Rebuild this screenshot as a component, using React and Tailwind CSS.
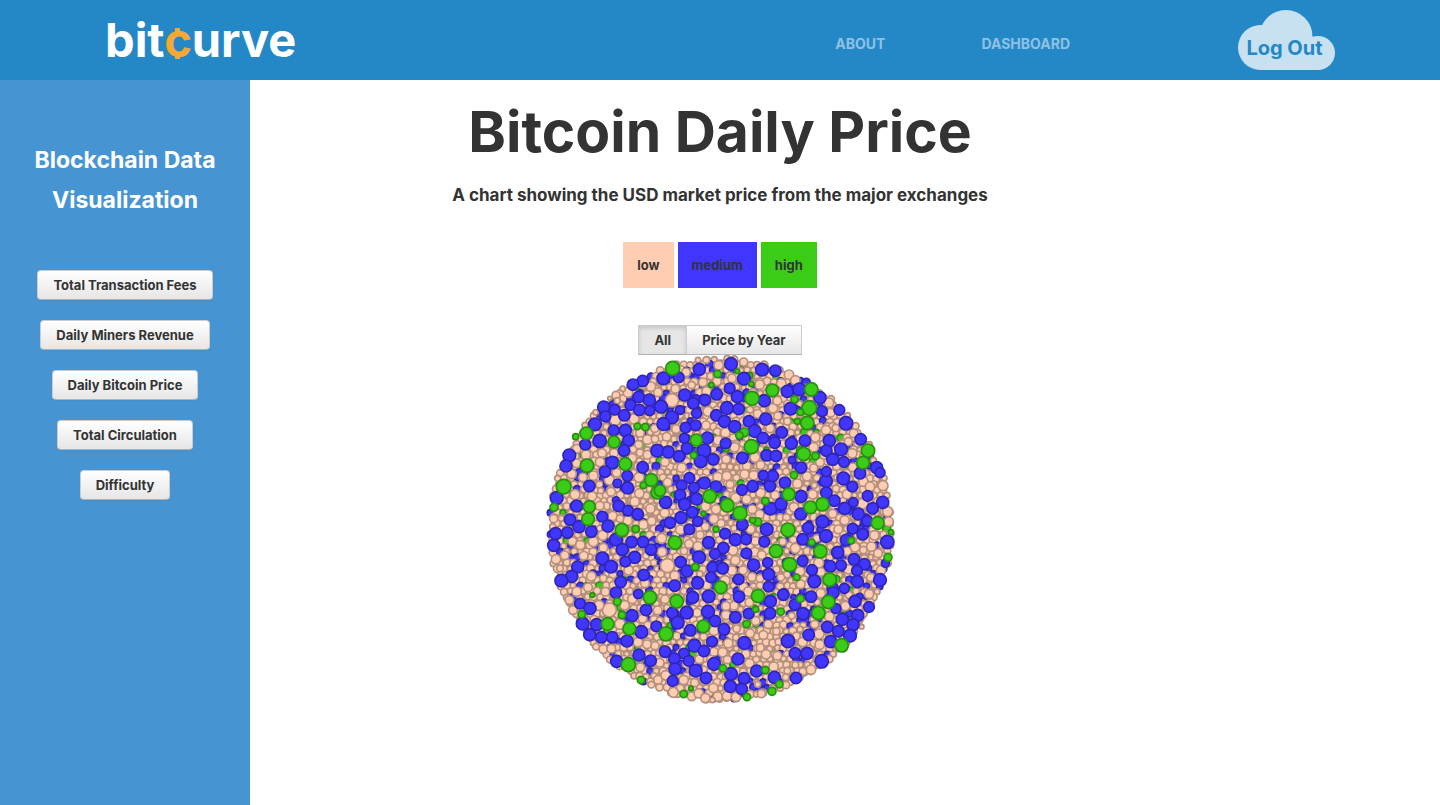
import React from "react";

const COLORS = {
  low: { fill: "#ffcdb2", stroke: "#b3907d" },
  medium: { fill: "#4136ff", stroke: "#2e26b3" },
  high: { fill: "#3acc17", stroke: "#298f10" },
};

// Each sector lists its bubbles as "x,y,r" in the sector's own coordinates.
const SECTORS = [
  {
    x: 0,
    y: 0,
    high: "139,250,20 222,276,19 141,347,21 256,342,20 107,260,10 316,231,12 292,229,11",
    medium:
      "308,93,18 279,104,18 296,141,18 328,150,19 191,171,19 224,179,17 271,165,17 298,180,18 329,182,16 196,199,17 253,196,18 165,223,20 221,241,17 256,241,19 179,273,21 266,271,18 252,302,18 136,284,17 88,316,20 217,338,20 78,348,19 308,352,18 352,302,20",
    low: "264,128,15 333,110,15 228,136,13 232,152,10 248,116,9 226,210,17 282,207,16 300,248,14 344,235,13 322,269,15 296,284,13 110,296,14 138,314,15 186,309,14 222,309,14 180,336,15 110,340,14 277,324,14 300,308,12 322,314,14 345,267,12 354,127,14 209,145,7 167,187,9 135,226,10",
  },
  {
    x: 360,
    y: 0,
    high: "38,55,22 276,145,22 337,121,20 274,290,22 109,270,19 154,105,9 173,72,12 232,64,8 274,102,9 253,247,14 238,256,12 101,316,11",
    medium:
      "118,58,19 213,42,20 306,59,20 346,62,18 252,86,20 10,85,20 56,82,17 74,135,19 100,160,18 135,150,18 170,133,18 209,115,17 232,140,19 313,152,19 201,174,20 236,177,18 36,202,20 3,170,20 60,180,14 110,190,16 169,196,18 193,214,19 224,230,19 267,214,18 284,243,20 317,207,19 77,233,17 107,226,17 142,264,19 73,265,16 81,295,18 10,222,20 25,306,19 57,319,18 132,302,21 122,334,20 160,328,18 197,280,17 309,264,18 344,278,18 247,324,18 320,316,18 348,318,18",
    low: "176,46,15 78,67,14 251,36,13 139,30,11 129,97,14 171,94,14 216,85,14 299,104,15 46,116,14 140,124,15 36,151,21 144,184,16 293,191,14 339,175,15 138,226,14 48,237,14 20,260,14 196,248,15 174,271,15 224,292,15 330,235,14 285,322,16 198,328,14 15,336,14 65,353,15 302,345,14 260,348,14 352,152,14 95,105,12 353,198,13 114,30,9",
  },
  {
    x: 720,
    y: 0,
    high: "94,118,21 88,174,23 82,219,21 71,312,21 264,302,21 249,338,20 44,148,12 61,187,11 52,214,10 106,318,12",
    medium:
      "22,124,19 58,118,20 120,143,19 32,176,20 178,180,17 198,220,21 126,184,17 5,247,18 34,280,19 75,272,18 148,272,19 139,302,18 183,298,20 158,328,19 192,336,17 242,268,18 63,353,18 290,353,19 36,330,12",
    low: "27,74,15 46,91,15 4,100,15 147,158,15 152,188,14 138,240,15 106,262,15 101,292,15 167,234,12 221,250,14 205,275,13 217,310,15 120,337,14 22,214,12 227,228,11 218,352,14 101,354,13 203,196,9",
  },
  {
    x: 0,
    y: 360,
    high: "71,50,23 148,110,19 144,147,20 246,180,21 334,30,20 352,68,20 42,112,13 287,177,12 310,46,11",
    medium:
      "50,84,20 148,48,18 263,54,19 262,18,17 110,108,19 90,149,18 117,170,19 154,185,18 187,140,17 204,168,19 236,108,18 264,122,17 293,133,18 47,191,19 82,188,18 41,226,19 228,209,20 247,239,19 275,216,18 309,216,18 333,239,18 284,262,19 256,275,17 187,265,20 213,290,20 113,291,19 95,319,19 64,332,20 311,315,18 242,336,18 232,40,14 195,5,18",
    low: "95,12,15 129,22,14 160,17,15 208,30,16 230,8,14 297,22,16 105,74,16 156,79,15 213,65,14 298,70,15 284,95,15 331,116,15 218,138,15 263,152,15 240,146,12 179,107,14 188,196,16 160,215,16 190,233,14 97,214,14 121,225,15 48,268,15 74,256,14 131,257,14 154,319,15 144,352,14 266,301,15 310,164,15 335,153,14 315,340,14 60,295,11 41,146,13 38,170,10 53,25,10 182,62,10 318,257,11 190,325,12 64,145,10",
  },
  {
    x: 360,
    y: 360,
    high: "149,79,21 202,106,21 240,130,22 45,218,21 348,243,21 0,62,18 316,93,12 293,156,13 278,151,10 106,291,12 182,352,20 130,131,8 168,178,10",
    medium:
      "88,24,17 65,46,17 102,53,17 133,39,19 168,50,18 60,75,18 110,87,19 17,97,19 74,103,19 97,127,18 63,143,19 30,158,18 113,154,16 88,178,17 246,60,17 278,49,18 330,48,18 338,18,18 310,16,16 331,116,20 247,164,18 320,178,20 195,191,17 226,209,19 146,218,19 190,234,18 165,252,17 117,262,20 62,276,18 81,303,19 157,292,17 188,295,18 153,322,17 113,339,19 44,347,18 259,250,17 281,285,19 313,215,17 258,208,17 323,278,16 326,313,19 236,328,17 326,350,17",
    low: "23,37,14 173,21,15 200,18,15 210,43,13 227,84,16 260,88,15 302,69,15 345,75,14 14,129,15 137,109,15 168,118,15 162,147,15 183,160,13 136,170,13 277,118,14 299,133,14 254,13,15 281,16,15 272,178,14 61,179,15 120,195,13 87,221,14 114,229,15 286,213,14 219,241,16 226,271,15 284,246,15 305,255,14 216,302,15 249,301,14 22,287,22 44,317,15 195,332,16 276,321,14 300,325,13 250,350,14 140,346,14 6,246,15 5,205,16 72,243,12",
  },
  {
    x: 720,
    y: 360,
    high: "26,73,20 127,103,21 91,112,20 24,180,22 121,244,21 29,284,22 149,329,21 293,159,20 42,15,12 324,262,13 333,187,9 95,217,11 214,212,11 50,322,11",
    medium:
      "15,38,18 138,33,20 139,68,18 190,25,20 217,50,17 63,79,19 3,102,19 62,132,19 163,92,18 194,115,19 127,155,20 84,174,18 138,198,20 68,208,18 235,132,19 262,153,17 308,97,19 278,115,18 263,78,17 220,97,15 248,193,18 218,176,17 198,210,18 322,216,21 173,247,19 222,268,18 253,283,18 68,273,17 96,300,17 151,289,18 183,286,17 231,302,17 103,334,20 232,335,19 300,330,20 240,10,18 139,5,16 316,280,13 158,355,18 300,8,16 193,355,16",
    low: "81,19,15 52,41,15 98,73,15 201,73,15 250,35,15 270,50,15 309,47,16 248,101,17 323,125,16 326,155,15 42,112,15 158,131,14 194,151,15 175,178,14 283,196,15 46,235,16 116,279,16 123,306,14 60,304,15 206,298,15 202,244,14 225,232,15 274,230,15 294,250,14 250,240,12 303,301,15 272,322,13 62,343,14 8,215,12 3,322,12 110,205,12 103,46,10",
  },
  {
    x: 0,
    y: 720,
    high: "330,22,21 410,34,21 203,102,20 268,116,20 378,132,22 490,109,20 265,224,22 303,270,12 431,312,12 125,73,12 232,35,12 246,75,12 453,295,8 157,15,8",
    medium:
      "228,8,18 120,41,17 150,55,19 276,77,19 318,60,18 128,101,20 170,104,19 149,134,19 184,142,18 217,142,18 261,153,19 304,126,20 349,109,17 397,69,18 440,68,20 413,98,20 458,22,19 506,19,20 504,65,20 525,93,18 451,121,18 463,167,20 516,155,17 492,183,18 375,185,18 297,195,19 332,212,18 230,214,19 432,191,17 403,206,18 446,213,17 405,237,19 398,273,17 467,242,20 498,264,18 522,222,20 295,12,15",
    low: "208,60,22 110,5,15 88,30,14 99,60,14 177,46,16 196,5,14 240,102,17 277,27,15 254,46,15 353,61,14 308,86,14 323,106,13 375,28,14 294,157,15 321,163,14 190,177,14 214,176,14 345,167,13 301,232,14 359,218,14 377,256,15 354,269,14 431,270,15 464,278,13 478,208,14 522,185,14 522,122,15 400,307,16 455,319,14 476,310,15 496,324,15 520,294,15 334,284,11 168,170,11 533,320,15 517,330,9 471,68,14 235,190,10",
  },
  {
    x: 540,
    y: 720,
    high: "114,18,21 295,69,21 325,36,21 365,166,21 182,65,12 241,26,12 156,304,13 81,321,12 178,283,12 80,102,12 136,240,12 107,58,10 9,235,12",
    medium:
      "57,20,18 151,34,19 190,14,18 150,70,18 225,44,18 249,71,19 273,20,18 340,8,18 405,34,19 447,51,17 413,76,19 367,88,19 399,104,19 390,137,20 355,124,18 322,111,18 348,56,16 46,82,18 86,71,17 12,118,18 73,159,20 204,153,21 266,135,18 332,155,19 225,190,18 261,190,19 305,214,21 110,243,19 163,262,19 228,264,18 33,252,20 72,265,18 31,289,19 65,297,18 54,207,19",
    low: "88,37,14 18,75,15 42,47,14 18,48,14 302,10,15 328,80,15 376,48,15 447,12,15 107,93,14 145,103,14 90,130,14 130,135,14 50,116,12 169,124,12 297,132,16 299,164,15 248,156,15 284,103,13 25,160,15 8,187,15 77,192,14 121,173,13 138,193,15 172,197,14 88,220,15 161,230,15 22,209,13 273,239,15 202,242,11 197,262,11 21,318,15 48,321,15 124,311,13 198,285,12 226,225,11 85,5,15 252,42,12 215,77,11 175,155,11 113,283,10 240,118,10 387,15,12 425,110,8",
  },
];

const CENTER = { x: 542, y: 538, r: 524 };

function parse(list) {
  return list.split(" ").map((item) => item.split(",").map(Number));
}

// The many small values are packed on a jittered grid below the larger ones.
function smallBubbles() {
  let seed = 7;
  const random = () => {
    seed = (seed * 16807) % 2147483647;
    return seed / 2147483647;
  };
  const bubbles = [];
  for (let row = 0; row < 64; row += 1) {
    for (let col = 0; col < 56; col += 1) {
      const x = 8 + col * 20 + (row % 2) * 10 + random() * 5;
      const y = 8 + row * 17 + random() * 5;
      const r = 9 + random() * 4;
      const pick = random();
      const kind = pick < 0.82 ? "low" : pick < 0.97 ? "medium" : "high";
      if (Math.hypot(x - CENTER.x, y - CENTER.y) + r <= CENTER.r) {
        bubbles.push({ x, y, r, kind });
      }
    }
  }
  return bubbles;
}

function Bubble({ x, y, r, kind }) {
  return (
    <circle
      cx={x}
      cy={y}
      r={r - 1}
      fill={COLORS[kind].fill}
      stroke={COLORS[kind].stroke}
      strokeWidth={5}
    />
  );
}

function BubbleChart() {
  return (
    <svg
      viewBox="0 15 1080 1065"
      role="img"
      aria-label="Bitcoin daily price bubbles"
      className="block h-[355px] w-[360px]"
    >
      <circle cx={CENTER.x} cy={CENTER.y} r={510} fill="#b3907d" />
      {smallBubbles().map((b, i) => (
        <Bubble key={i} {...b} />
      ))}
      {["low", "medium", "high"].map((kind) =>
        SECTORS.map((s) =>
          parse(s[kind]).map(([x, y, r]) => (
            <Bubble key={`${kind}-${s.x + x}-${s.y + y}`} x={s.x + x} y={s.y + y} r={r} kind={kind} />
          ))
        )
      )}
    </svg>
  );
}

function Logo() {
  return (
    <a href="#home" className="text-[47px] leading-[80px] font-bold text-white">
      bit
      <span className="relative text-[#f7a833]">
        c
        <span className="absolute top-[17px] left-[11px] h-1 w-[5px] bg-[#f7a833]" />
        <span className="absolute bottom-[9px] left-[11px] h-1 w-[5px] bg-[#f7a833]" />
      </span>
      urve
    </a>
  );
}

function Header() {
  return (
    <header className="flex h-20 items-center bg-[#2488c7] px-[105px]">
      <Logo />
      <nav className="ml-auto flex gap-24 pt-2 text-[14px] leading-5 font-bold text-[#8fc1e2]">
        <a href="#about">ABOUT</a>
        <a href="#dashboard">DASHBOARD</a>
      </nav>
      <button className="relative ml-[168px] h-[60px] w-[97px] text-[20px] font-bold text-[#2488c7]">
        <svg viewBox="0 0 97 60" className="absolute inset-0 h-full w-full" fill="#c8e1f0" aria-hidden="true">
          <circle cx="22.5" cy="37.5" r="22.5" />
          <circle cx="48" cy="26.5" r="26.5" />
          <circle cx="80" cy="43" r="17" />
          <path d="M22 36H80V60H22Z" />
        </svg>
        <span className="relative block pt-4 pr-1 whitespace-nowrap">Log Out</span>
      </button>
    </header>
  );
}

const BUTTON_FACE =
  "h-[30px] border border-[#cccccc] border-b-[#b3b3b3] px-[15px] text-[13px] leading-5 font-bold whitespace-nowrap text-[#333333]";

const LINKS = [
  "Total Transaction Fees",
  "Daily Miners Revenue",
  "Daily Bitcoin Price",
  "Total Circulation",
  "Difficulty",
];

function Sidebar() {
  return (
    <aside className="w-[250px] shrink-0 bg-[#4695d2] pt-[60px]">
      <h2 className="px-5 text-center text-[23px] leading-10 font-bold text-white">
        Blockchain Data Visualization
      </h2>
      <div className="mt-[50px] flex flex-col items-center gap-5">
        {LINKS.map((label) => (
          <button
            key={label}
            className={`${BUTTON_FACE} rounded-[4px] bg-linear-to-b from-white to-[#e6e6e6] shadow-[0_1px_2px_rgba(0,0,0,0.05)]`}
          >
            {label}
          </button>
        ))}
      </div>
    </aside>
  );
}

export default function App() {
  return (
    <div className="flex min-h-screen flex-col bg-white font-['Inter',sans-serif] text-[#333333]">
      <Header />
      <div className="flex flex-1">
        <Sidebar />
        <main className="flex flex-1 flex-col items-center pt-5 pr-[250px]">
          <h1 className="text-[57px] leading-[64px] font-bold whitespace-nowrap">Bitcoin Daily Price</h1>
          <h2 className="mt-5 text-[17px] leading-[22px] font-bold whitespace-nowrap">
            A chart showing the USD market price from the major exchanges
          </h2>
          <ul className="mt-9 flex gap-1 text-[13px] leading-[46px] font-bold">
            <li className="bg-[#ffcdb2] px-[14px]">low</li>
            <li className="bg-[#4136ff] px-[14px]">medium</li>
            <li className="bg-[#3acc17] px-[14px]">high</li>
          </ul>
          <div className="mt-[37px] flex">
            <button
              aria-pressed="true"
              className={`${BUTTON_FACE} bg-[#e6e6e6] shadow-[inset_0_2px_4px_rgba(0,0,0,0.15)]`}
            >
              All
            </button>
            <button
              aria-pressed="false"
              className={`${BUTTON_FACE} -ml-px bg-linear-to-b from-white to-[#e6e6e6]`}
            >
              Price by Year
            </button>
          </div>
          <BubbleChart />
        </main>
      </div>
    </div>
  );
}
